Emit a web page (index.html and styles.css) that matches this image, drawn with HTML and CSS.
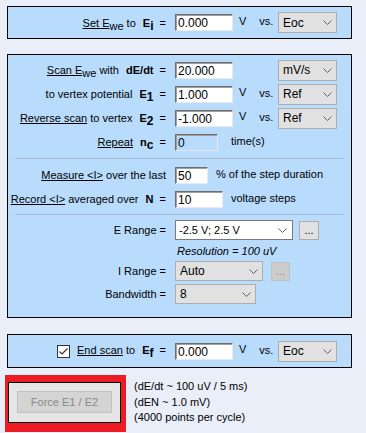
FILE: index.html
```html
<!DOCTYPE html>
<html lang="en">
<head>
    <meta charset="UTF-8">
    <meta name="viewport" content="width=device-width, initial-scale=1.0">
    <link rel="stylesheet" href="styles.css">
</head>
<body>
    <div class="page">
        <div class="panel panel-set">
            <div class="row">
                <span class="lbl"><u>Set E</u><sub>we</sub> to <b class="sym">E<sub>i</sub></b> =</span>
                <input class="edit w58" type="text" value="0.000">
                <span class="unit">V</span><span class="vs">vs.</span>
                <div class="combo"><span>Eoc</span><svg width="9" height="5" viewBox="0 0 9 5"><polyline points="0.5,0.5 4.5,4.5 8.5,0.5" fill="none" stroke="#606060"/></svg></div>
            </div>
        </div>

        <div class="panel panel-scan">
            <div class="row">
                <span class="lbl"><u>Scan E</u><sub>we</sub> with <b class="sym">dE/dt</b> =</span>
                <input class="edit w58" type="text" value="20.000">
                <div class="combo"><span>mV/s</span><svg width="9" height="5" viewBox="0 0 9 5"><polyline points="0.5,0.5 4.5,4.5 8.5,0.5" fill="none" stroke="#606060"/></svg></div>
            </div>
            <div class="row">
                <span class="lbl">to vertex potential <b class="sym">E<sub>1</sub></b> =</span>
                <input class="edit w58" type="text" value="1.000">
                <span class="unit">V</span><span class="vs">vs.</span>
                <div class="combo"><span>Ref</span><svg width="9" height="5" viewBox="0 0 9 5"><polyline points="0.5,0.5 4.5,4.5 8.5,0.5" fill="none" stroke="#606060"/></svg></div>
            </div>
            <div class="row">
                <span class="lbl"><u>Reverse scan</u> to vertex <b class="sym">E<sub>2</sub></b> =</span>
                <input class="edit w58" type="text" value="-1.000">
                <span class="unit">V</span><span class="vs">vs.</span>
                <div class="combo"><span>Ref</span><svg width="9" height="5" viewBox="0 0 9 5"><polyline points="0.5,0.5 4.5,4.5 8.5,0.5" fill="none" stroke="#606060"/></svg></div>
            </div>
            <div class="row">
                <span class="lbl"><u>Repeat</u> <b class="sym">n<sub>c</sub></b> =</span>
                <input class="edit w43 off" type="text" value="0" disabled>
                <span class="after">time(s)</span>
            </div>

            <div class="sep"></div>

            <div class="row">
                <span class="lbl"><u>Measure &lt;I&gt;</u> over the last</span>
                <input class="edit w33" type="text" value="50">
                <span class="after near">% of the step duration</span>
            </div>
            <div class="row">
                <span class="lbl"><u>Record &lt;I&gt;</u> averaged over <b class="sym">N</b> =</span>
                <input class="edit w48" type="text" value="10">
                <span class="after near">voltage steps</span>
            </div>

            <div class="sep sep-low"></div>

            <div class="row">
                <span class="lbl">E Range =</span>
                <div class="combo combo-white w118"><span>-2.5 V; 2.5 V</span><svg width="9" height="5" viewBox="0 0 9 5"><polyline points="0.5,0.5 4.5,4.5 8.5,0.5" fill="none" stroke="#606060"/></svg></div>
                <button class="dots">...</button>
            </div>
            <div class="resolution">Resolution = 100 uV</div>
            <div class="row row-i">
                <span class="lbl">I Range =</span>
                <div class="combo w88"><span>Auto</span><svg width="9" height="5" viewBox="0 0 9 5"><polyline points="0.5,0.5 4.5,4.5 8.5,0.5" fill="none" stroke="#606060"/></svg></div>
                <button class="dots dots-off" disabled>...</button>
            </div>
            <div class="row">
                <span class="lbl">Bandwidth =</span>
                <div class="combo w81"><span>8</span><svg width="9" height="5" viewBox="0 0 9 5"><polyline points="0.5,0.5 4.5,4.5 8.5,0.5" fill="none" stroke="#606060"/></svg></div>
            </div>
        </div>

        <div class="panel panel-end">
            <div class="row">
                <span class="lbl"><span class="check"><svg width="11" height="11" viewBox="0 0 11 11"><polyline points="1.5,5.5 4,8 9.5,2.5" fill="none" stroke="#333" stroke-width="1.2"/></svg></span><u>End scan</u> to <b class="sym">E<sub>f</sub></b> =</span>
                <input class="edit w58" type="text" value="0.000">
                <span class="unit">V</span><span class="vs">vs.</span>
                <div class="combo"><span>Eoc</span><svg width="9" height="5" viewBox="0 0 9 5"><polyline points="0.5,0.5 4.5,4.5 8.5,0.5" fill="none" stroke="#606060"/></svg></div>
            </div>
        </div>

        <div class="bottom">
            <div class="highlight">
                <div class="frame">
                    <button class="force" disabled>Force E1 / E2</button>
                </div>
            </div>
            <div class="notes">
                <div>(dE/dt ~ 100 uV / 5 ms)</div>
                <div>(dEN ~ 1.0 mV)</div>
                <div>(4000 points per cycle)</div>
            </div>
        </div>
    </div>
</body>
</html>
```

FILE: styles.css
```css
* {
    margin: 0;
    padding: 0;
    box-sizing: border-box;
}
body {
    background: #eaeef9;
    color: #000;
    font-family: "Liberation Sans", Arial, sans-serif;
    font-size: 11px;
    width: 366px;
    height: 433px;
    overflow: hidden;
}
.page {
    padding: 6px 14px 0 7px;
}

/* Panels */
.panel {
    width: 345px;
    background: #b9dcfd;
    border: 1px solid #000;
}
.panel-set {
    padding: 5px 0;
    margin-bottom: 15px;
}
.panel-set .row {
    height: 21px;
}
.panel-scan {
    padding: 3px 0 11px;
    margin-bottom: 16px;
}
.panel-end {
    padding: 5px 0;
}
.panel-end .row {
    height: 22px;
}

.row {
    display: flex;
    align-items: center;
    height: 24px;
    padding-right: 14px;
}
.row-i {
    height: 22px;
}
.lbl {
    width: 158px;
    margin-right: 9px;
    text-align: right;
    white-space: nowrap;
}
.lbl u {
    text-decoration: underline;
}
.lbl sub {
    font-size: 11px;
    vertical-align: -3px;
    line-height: 0;
}
.sym {
    font-weight: bold;
    margin-left: 4px;
    margin-right: 3px;
}
.sym sub {
    font-size: 12px;
}

/* Edits */
.edit {
    height: 17px;
    background: #fff;
    border: 1px solid;
    border-color: #6e6e6e #e9e9e9 #e9e9e9 #6e6e6e;
    box-shadow: inset 1px 1px 0 #a0a0a0;
    font-family: "Liberation Sans", Arial, sans-serif;
    font-size: 12px;
    color: #000;
    padding: 1px 0 0 2px;
    outline: none;
}
.edit.off {
    background: #b9dcfd;
}
.w58 { width: 58px; }
.w43 { width: 43px; }
.w33 { width: 33px; }
.w48 { width: 48px; }

.unit {
    margin-left: 6px;
    margin-top: -4px;
}
.vs {
    margin-left: 13px;
    margin-top: -3px;
}
.after {
    margin-left: 13px;
    margin-top: -3px;
}
.after.near {
    margin-left: 8px;
}

/* Combos */
.combo {
    display: flex;
    align-items: center;
    justify-content: space-between;
    width: 59px;
    height: 21px;
    margin-left: auto;
    padding: 0 4px;
    background: #e1e1e1;
    border: 1px solid #adadad;
    font-size: 12px;
}
.combo svg {
    flex-shrink: 0;
}
.combo-white {
    background: #fff;
    border-color: #7a7a7a;
    height: 20px;
    padding: 0 5px 0 3px;
    font-size: 11px;
}
.w118, .w88, .w81 {
    margin-left: 0;
}
.w118 { width: 118px; }
.w88 { width: 88px; height: 20px; }
.w81 { width: 81px; height: 20px; }

.dots {
    width: 20px;
    height: 19px;
    margin-left: 6px;
    background: #e1e1e1;
    border: 1px solid #adadad;
    font-family: "Liberation Sans", Arial, sans-serif;
    font-size: 11px;
    line-height: 17px;
    color: #000;
}
.dots-off {
    margin-left: 8px;
    width: 19px;
    background: #cccccc;
    border-color: #bfbfbf;
    color: #8d8d8d;
}

.resolution {
    height: 18px;
    line-height: 18px;
    padding-left: 169px;
    font-style: italic;
}

.sep {
    height: 1px;
    background: #a4bad2;
    margin: 4px 8px 4px 7px;
}
.sep-low {
    margin: 3px 8px 3px 7px;
}

/* Checkbox */
.check {
    display: inline-flex;
    align-items: center;
    justify-content: center;
    width: 13px;
    height: 13px;
    margin-right: 7px;
    vertical-align: -3px;
    background: #fff;
    border: 1px solid #333;
}

/* Bottom */
.bottom {
    display: flex;
    margin-top: 7px;
    margin-left: -2px;
}
.highlight {
    border-style: solid;
    border-color: #ed1c24;
    border-width: 7px 5px 9px 3px;
}
.frame {
    width: 113px;
    padding: 8px 8px 9px;
    background: #e5e5e5;
    border: 1px solid #000;
}
.force {
    display: block;
    width: 95px;
    height: 22px;
    background: #d4d4d4;
    border: 1px solid #c0c0c0;
    color: #8a8a8a;
    font-family: "Liberation Sans", Arial, sans-serif;
    font-size: 11px;
}
.notes {
    margin-left: 8px;
    margin-top: 4px;
    line-height: 15.5px;
}
```
